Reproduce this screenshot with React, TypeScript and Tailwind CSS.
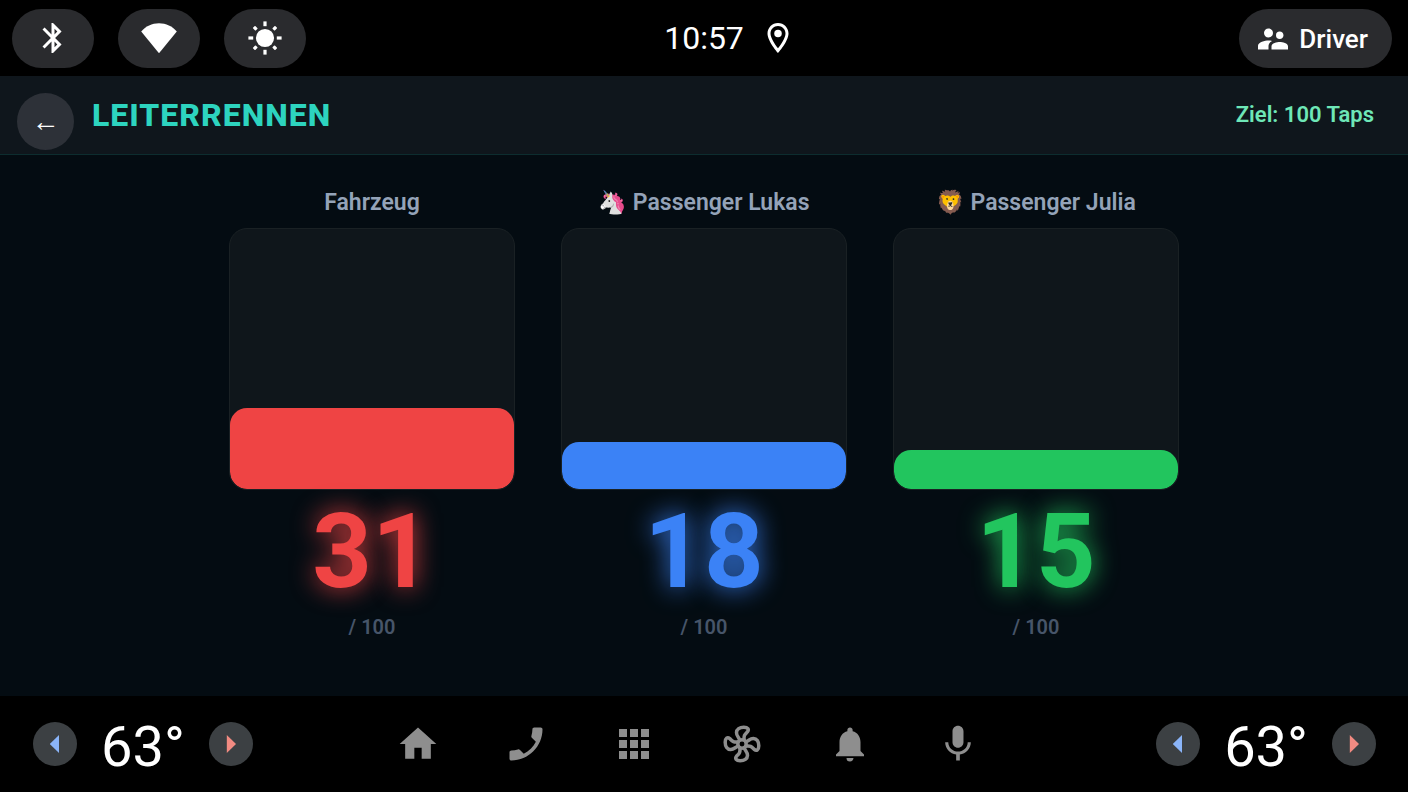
import React from 'react';
import {
  MdBluetooth,
  MdHome,
  MdNotifications,
  MdPhone,
  MdSupervisorAccount,
} from 'react-icons/md';

const GOAL = 100;

const players = [
  {
    name: 'Fahrzeug',
    taps: 31,
    text: 'text-[#ef4444] [text-shadow:0_0_26px_#ef4444]',
    fill: 'bg-[#ef4444]',
  },
  {
    name: '🦄 Passenger Lukas',
    taps: 18,
    text: 'text-[#3b82f6] [text-shadow:0_0_26px_#3b82f6]',
    fill: 'bg-[#3b82f6]',
  },
  {
    name: '🦁 Passenger Julia',
    taps: 15,
    text: 'text-[#22c55e] [text-shadow:0_0_26px_#22c55e]',
    fill: 'bg-[#22c55e]',
  },
];

const WifiIcon = () => (
  <svg viewBox="0 0 36 36" className="size-9" fill="currentColor" aria-hidden="true">
    <path d="M18 33.2 0.2 11.6C4.6 6.2 11 3.2 18 3.2s13.4 3 17.8 8.4z" />
  </svg>
);

const SunIcon = () => (
  <svg viewBox="0 0 36 36" className="size-9" fill="currentColor" aria-hidden="true">
    <circle cx="18" cy="18" r="9.1" />
    {[0, 90, 180, 270].map((angle) => (
      <g key={angle} transform={`rotate(${angle} 18 18)`}>
        <rect x="16.4" y="1.4" width="3.2" height="4.8" />
        <rect x="16.3" y="2.2" width="3.4" height="4" rx="0.8" transform="rotate(45 18 18)" />
      </g>
    ))}
  </svg>
);

const PinIcon = () => (
  <svg viewBox="0 0 24 24" className="size-9" fill="currentColor" aria-hidden="true">
    <path d="M12 2C8.13 2 5 5.13 5 9c0 5.25 7 13 7 13s7-7.75 7-13c0-3.87-3.13-7-7-7zM7 9c0-2.76 2.24-5 5-5s5 2.24 5 5c0 2.88-2.88 7.19-5 9.88C9.92 16.21 7 11.85 7 9z" />
    <circle cx="12" cy="9" r="2.5" />
  </svg>
);

const AppsIcon = () => (
  <svg viewBox="0 0 44 44" className="size-11" fill="currentColor" aria-hidden="true">
    {[7, 18, 29].map((y) =>
      [7, 18, 29].map((x) => <rect key={`${x}-${y}`} x={x} y={y} width="8" height="8" />)
    )}
  </svg>
);

const FanIcon = () => (
  <svg
    viewBox="-22 -22 44 44"
    className="size-11"
    fill="none"
    stroke="currentColor"
    strokeWidth="3.5"
    aria-hidden="true"
  >
    <circle r="4.2" />
    {[0, 90, 180, 270].map((angle) => (
      <path
        key={angle}
        transform={`rotate(${angle})`}
        d="M-2.2 -3.4C-2.4 -6.4 -5.6 -7.6 -5.5 -11.4C-5.4 -14.8 -2.4 -16.8 1.8 -16.8C5.8 -16.8 7.4 -14.6 5.4 -12.2C3 -9.8 1.4 -8.8 2.2 -3.6"
      />
    ))}
  </svg>
);

const MicIcon = () => (
  <svg viewBox="0 0 24 24" className="size-11" fill="currentColor" aria-hidden="true">
    <path d="M12 14c1.66 0 2.99-1.34 2.99-3L15 5c0-1.66-1.34-3-3-3S9 3.34 9 5v6c0 1.66 1.34 3 3 3zm5.3-3c0 3-2.54 5.1-5.3 5.1S6.7 14 6.7 11H5c0 3.41 2.72 6.23 6 6.72V21h2v-3.28c3.28-.48 6-3.3 6-6.72h-1.7z" />
  </svg>
);

const quickSettings = [
  { label: 'Bluetooth', icon: <MdBluetooth className="size-9" /> },
  { label: 'WLAN', icon: <WifiIcon /> },
  { label: 'Helligkeit', icon: <SunIcon /> },
];

const navItems = [
  { label: 'Home', icon: <MdHome className="size-11" /> },
  { label: 'Telefon', icon: <MdPhone className="size-11 -scale-x-100" /> },
  { label: 'Apps', icon: <AppsIcon /> },
  { label: 'Klima', icon: <FanIcon /> },
  { label: 'Mitteilungen', icon: <MdNotifications className="size-[42px]" /> },
  { label: 'Mikrofon', icon: <MicIcon /> },
];

const StatusBar = () => (
  <div className="grid grid-cols-[1fr_auto_1fr] items-center bg-black pt-[9px] pr-4 pb-2 pl-3">
    <div className="flex gap-6">
      {quickSettings.map((item) => (
        <button
          key={item.label}
          aria-label={item.label}
          className="flex h-[59px] w-[82px] items-center justify-center rounded-full bg-[#2a2b2e] pb-px"
        >
          {item.icon}
        </button>
      ))}
    </div>
    <div className="ml-14 flex items-center gap-4 pb-px">
      <span className="text-[32px] leading-9">10:57</span>
      <PinIcon />
    </div>
    <button className="flex h-[59px] items-center gap-2 justify-self-end rounded-full bg-[#2a2b2e] pr-6 pl-4 text-[26px] font-medium">
      <MdSupervisorAccount className="size-9" />
      <span className="pt-0.5">Driver</span>
    </button>
  </div>
);

const TemperatureControl = ({ side }: { side: string }) => (
  <div className="flex items-center gap-6">
    <button
      aria-label={`${side} kälter`}
      className="flex size-11 items-center justify-center rounded-full bg-[#3c4043] text-[#8ab4f8]"
    >
      <svg viewBox="0 0 10 18" className="h-[18px] w-[10px]" fill="currentColor">
        <path d="M9 0v18L-0.2 9z" />
      </svg>
    </button>
    <span className="pt-[5px] text-[56px] leading-none">63°</span>
    <button
      aria-label={`${side} wärmer`}
      className="flex size-11 items-center justify-center rounded-full bg-[#3c4043] text-[#f28b82]"
    >
      <svg viewBox="0 0 10 18" className="h-[18px] w-[10px]" fill="currentColor">
        <path d="M0.8 0v18L10 9z" />
      </svg>
    </button>
  </div>
);

const App = () => {
  return (
    <div className="flex min-h-screen flex-col bg-[#040c12] font-[Roboto,'Noto_Color_Emoji',sans-serif] text-white">
      <StatusBar />

      <header className="flex h-[79px] items-center gap-[18px] border-b border-[#0d2d2f] bg-[#0f161c] pr-[34px] pl-[17px]">
        <button
          aria-label="Zurück"
          className="mt-[13px] flex size-[57px] items-center justify-center rounded-full bg-[#2d3138] text-[28px]"
        >
          ←
        </button>
        <h1 className="flex-1 text-[32px] font-extrabold tracking-[1px] text-[#2dd4bf]">
          LEITERRENNEN
        </h1>
        <span className="pb-0.5 text-[22px] font-semibold text-[#6ee7b7]">Ziel: {GOAL} Taps</span>
      </header>

      <main className="mx-auto grid w-full max-w-[950px] flex-1 grid-cols-3 content-start gap-[46px] pt-8">
        {players.map((player) => (
          <section key={player.name} className="flex flex-col items-center">
            <h2 className="text-[23px] leading-8 font-semibold whitespace-nowrap text-[#94a3b8]">
              {player.name}
            </h2>
            <div className="mt-[9px] flex h-[262px] w-full items-end overflow-hidden rounded-[18px] border border-[#1a2124] bg-[#0f161b]">
              <div
                className={`w-full rounded-[17px] ${player.fill}`}
                style={{ height: `${(player.taps / GOAL) * 100}%` }}
              />
            </div>
            <p className={`mt-[10px] text-[104px] leading-[104px] font-bold ${player.text}`}>
              {player.taps}
            </p>
            <p className="mt-[11px] text-[20px] leading-6 font-semibold text-[#475569]">/ {GOAL}</p>
          </section>
        ))}
      </main>

      <footer className="flex h-24 items-center justify-between bg-black pr-8 pl-[33px]">
        <TemperatureControl side="Links" />
        <nav className="mr-[34px] flex gap-16 text-[#8e8e8e]">
          {navItems.map((item) => (
            <button
              key={item.label}
              aria-label={item.label}
              className="flex size-11 items-center justify-center"
            >
              {item.icon}
            </button>
          ))}
        </nav>
        <TemperatureControl side="Rechts" />
      </footer>
    </div>
  );
};

export default App;
